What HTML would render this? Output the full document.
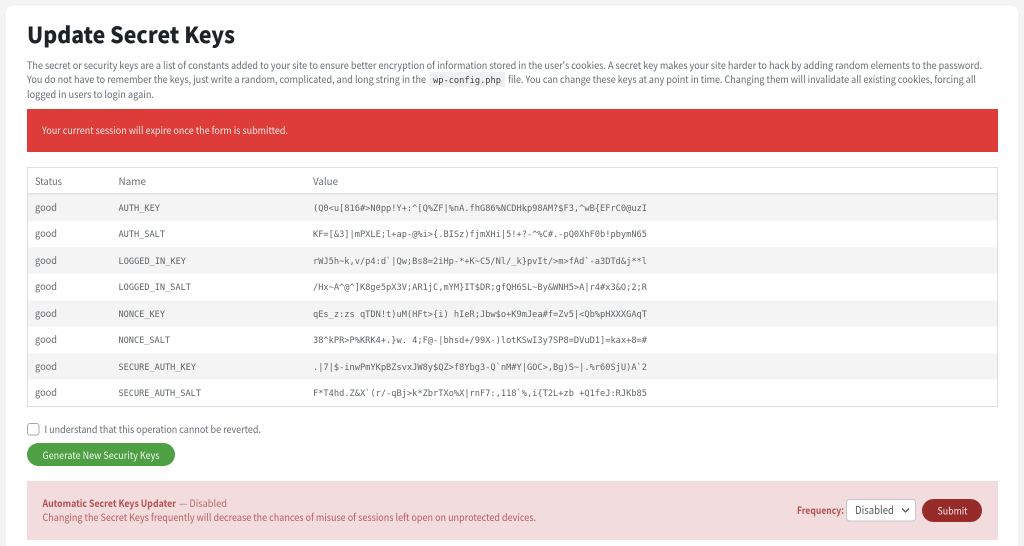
<!DOCTYPE html>
<html lang="en">
<head>
<meta charset="utf-8">
<title>Update Secret Keys</title>
<style>
html,body{margin:0;padding:0;width:1024px;height:546px;overflow:hidden;background:#f4f4f4}
svg{display:block;position:absolute;left:0;top:0}
text{font-family:"Noto Sans CJK SC","Liberation Sans",sans-serif;font-size:10px;fill:#666c72}
.m{font-family:"DejaVu Sans Mono",monospace;font-size:8.7px;fill:#5f6569}
</style>
</head>
<body>
<svg width="1024" height="546" viewBox="0 0 1024 546" xmlns="http://www.w3.org/2000/svg">
<rect x="5" y="5" width="1014" height="560" rx="8" fill="#fff" stroke="#eeeeee" stroke-width="1"/>

<text x="27" y="43" textLength="208" lengthAdjust="spacingAndGlyphs" style="font-size:22px;font-weight:900;fill:#1d2327">Update Secret Keys</text>

<text x="27" y="69" textLength="955" lengthAdjust="spacingAndGlyphs">The secret or security keys are a list of constants added to your site to ensure better encryption of information stored in the user's cookies. A secret key makes your site harder to hack by adding random elements to the password.</text>
<text x="27" y="83" textLength="399" lengthAdjust="spacingAndGlyphs">You do not have to remember the keys, just write a random, complicated, and long string in the</text>
<rect x="429.500" y="72" width="75.500" height="15" fill="#f0f0f1"/>
<text class="m" x="433" y="83" textLength="68" lengthAdjust="spacingAndGlyphs" style="font-family:'DejaVu Sans Mono',monospace;font-size:8.700px;fill:#3c434a">wp-config.php</text>
<text x="508" y="83" textLength="468" lengthAdjust="spacingAndGlyphs">file. You can change these keys at any point in time. Changing them will invalidate all existing cookies, forcing all</text>
<text x="27" y="98" textLength="127" lengthAdjust="spacingAndGlyphs">logged in users to login again.</text>

<rect x="27" y="109" width="971" height="43" fill="#dd3c38"/>
<text x="42" y="134" textLength="246" lengthAdjust="spacingAndGlyphs" style="fill:#fbe6e5">Your current session will expire once the form is submitted.</text>

<rect x="27.500" y="167.500" width="970" height="239" fill="#fff" stroke="#dddddd"/>
<rect x="28" y="193" width="969" height="1.500" fill="#e2e2e2"/>
<rect x="28" y="194.500" width="969" height="26.300" fill="#f4f4f4"/>
<rect x="28" y="247.300" width="969" height="26.300" fill="#f4f4f4"/>
<rect x="28" y="300.300" width="969" height="26.300" fill="#f4f4f4"/>
<rect x="28" y="353.300" width="969" height="26.300" fill="#f4f4f4"/>

<text x="35" y="185" textLength="27" lengthAdjust="spacingAndGlyphs">Status</text>
<text x="118.500" y="185" textLength="27.500" lengthAdjust="spacingAndGlyphs">Name</text>
<text x="313" y="185" textLength="25" lengthAdjust="spacingAndGlyphs">Value</text>

<text x="35" y="211" textLength="22" lengthAdjust="spacingAndGlyphs">good</text>
<text class="m" x="118.500" y="211" textLength="41.500" lengthAdjust="spacingAndGlyphs">AUTH_KEY</text>
<text class="m" x="313" y="211" textLength="334" lengthAdjust="spacingAndGlyphs">(Q0&lt;u[816#&gt;N0pp!Y+:^[Q%ZF|%nA.fhG86%NCDHkp98AM?$F3,^wB{EFrC0@uzI</text>

<text x="35" y="237" textLength="22" lengthAdjust="spacingAndGlyphs">good</text>
<text class="m" x="118.500" y="237" textLength="46.500" lengthAdjust="spacingAndGlyphs">AUTH_SALT</text>
<text class="m" x="313" y="237" textLength="334" lengthAdjust="spacingAndGlyphs">KF=[&amp;3]|mPXLE;l+ap-@%i&gt;{.BISz)fjmXHi|5!+?-^%C#.-pQ0XhF0b!pbymN65</text>

<text x="35" y="264" textLength="22" lengthAdjust="spacingAndGlyphs">good</text>
<text class="m" x="118.500" y="264" textLength="67.500" lengthAdjust="spacingAndGlyphs">LOGGED_IN_KEY</text>
<text class="m" x="313" y="264" textLength="334" lengthAdjust="spacingAndGlyphs">rWJ5h~k,v/p4:d`|Qw;Bs8=2iHp-*+K~C5/Nl/_k}pvIt/&gt;m&gt;fAd`-a3DTd&amp;j**l</text>

<text x="35" y="290" textLength="22" lengthAdjust="spacingAndGlyphs">good</text>
<text class="m" x="118.500" y="290" textLength="72.500" lengthAdjust="spacingAndGlyphs">LOGGED_IN_SALT</text>
<text class="m" x="313" y="290" textLength="334" lengthAdjust="spacingAndGlyphs">/Hx~A^@^]K8ge5pX3V;AR1jC,mYM}IT$DR;gfQH6SL~By&amp;WNH5&gt;A|r4#x3&amp;O;2;R</text>

<text x="35" y="317" textLength="22" lengthAdjust="spacingAndGlyphs">good</text>
<text class="m" x="118.500" y="317" textLength="46.500" lengthAdjust="spacingAndGlyphs">NONCE_KEY</text>
<text class="m" x="313" y="317" textLength="334" lengthAdjust="spacingAndGlyphs">qEs_z:zs qTDN!t)uM(HFt&gt;{i) hIeR;Jbw$o+K9mJea#f=Zv5|&lt;Qb%pHXXXGAqT</text>

<text x="35" y="343" textLength="22" lengthAdjust="spacingAndGlyphs">good</text>
<text class="m" x="118.500" y="343" textLength="51.500" lengthAdjust="spacingAndGlyphs">NONCE_SALT</text>
<text class="m" x="313" y="343" textLength="334" lengthAdjust="spacingAndGlyphs">38^kPR&gt;P%KRK4+.}w. 4;F@-|bhsd+/99X-)lotKSwI3y7SP8=DVuD1]=kax+8=#</text>

<text x="35" y="370" textLength="22" lengthAdjust="spacingAndGlyphs">good</text>
<text class="m" x="118.500" y="370" textLength="77.500" lengthAdjust="spacingAndGlyphs">SECURE_AUTH_KEY</text>
<text class="m" x="313" y="370" textLength="334" lengthAdjust="spacingAndGlyphs">.|7|$-inwPmYKpBZsvxJW8y$QZ&gt;f8Ybg3-Q`nM#Y|GOC&gt;,Bg)S~|.%r60SjU)A`2</text>

<text x="35" y="396" textLength="22" lengthAdjust="spacingAndGlyphs">good</text>
<text class="m" x="118.500" y="396" textLength="82.500" lengthAdjust="spacingAndGlyphs">SECURE_AUTH_SALT</text>
<text class="m" x="313" y="396" textLength="334" lengthAdjust="spacingAndGlyphs">F*T4hd.Z&amp;X`(r/-qBj&gt;k*ZbrTXo%X|rnF7:,118`%,i{T2L+zb +Q1feJ:RJKb85</text>

<rect x="27.500" y="423.500" width="11.500" height="11.500" rx="2.500" fill="#fff" stroke="#a9a9a9"/>
<text x="44.500" y="433" textLength="216.500" lengthAdjust="spacingAndGlyphs">I understand that this operation cannot be reverted.</text>

<rect x="27" y="443" width="148" height="23" rx="11.500" fill="#4f9f45"/>
<text x="42.500" y="459" textLength="117" lengthAdjust="spacingAndGlyphs" style="fill:#eef6ec">Generate New Security Keys</text>

<rect x="27" y="481" width="971" height="59" fill="#f2dcde"/>
<text x="42.500" y="507" textLength="133.500" lengthAdjust="spacingAndGlyphs" style="font-weight:bold;fill:#b5504f">Automatic Secret Keys Updater</text>
<text x="179" y="507" textLength="48" lengthAdjust="spacingAndGlyphs" style="fill:#bd6a69">— Disabled</text>
<text x="42.500" y="521" textLength="493.500" lengthAdjust="spacingAndGlyphs" style="fill:#bb5c5b">Changing the Secret Keys frequently will decrease the chances of misuse of sessions left open on unprotected devices.</text>

<text x="797" y="514" textLength="47" lengthAdjust="spacingAndGlyphs" style="font-weight:bold;fill:#b5504f">Frequency:</text>
<rect x="846.500" y="499.500" width="69" height="21.500" rx="3" fill="#fff" stroke="#c9c4c6"/>
<text x="855" y="514" textLength="39" lengthAdjust="spacingAndGlyphs" style="font-size:11px;fill:#50575e">Disabled</text>
<path d="M902 508.500l3.500 3.500 3.500-3.500" fill="none" stroke="#50575e" stroke-width="1.300"/>
<rect x="922" y="499" width="60" height="23" rx="11.500" fill="#972b2a"/>
<text x="937.500" y="514.500" textLength="30" lengthAdjust="spacingAndGlyphs" style="fill:#f6e6e6">Submit</text>
</svg>
</body>
</html>
